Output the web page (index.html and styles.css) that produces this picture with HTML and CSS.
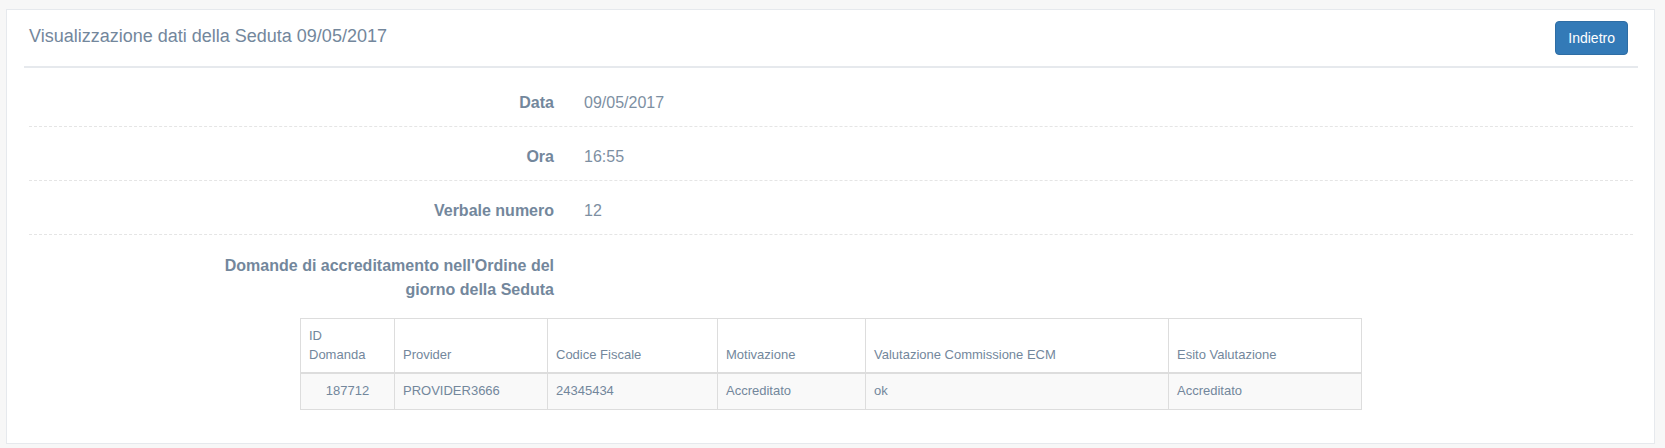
FILE: index.html
```html
<!DOCTYPE html>
<html lang="it">
<head>
<meta charset="UTF-8">
<meta name="viewport" content="width=device-width, initial-scale=1.0">
<title>Visualizzazione dati della Seduta</title>
<link rel="stylesheet" href="styles.css">
</head>

<body>
<div class="x-panel">
    <div class="x-title">
        <h2>Visualizzazione dati della Seduta 09/05/2017</h2>
        <button class="btn-primary">Indietro</button>
    </div>

    <div class="detail-row first">
        <div class="detail-label">Data</div>
        <div class="detail-value">09/05/2017</div>
    </div>
    <div class="detail-row">
        <div class="detail-label">Ora</div>
        <div class="detail-value">16:55</div>
    </div>
    <div class="detail-row">
        <div class="detail-label">Verbale numero</div>
        <div class="detail-value">12</div>
    </div>
    <div class="detail-row last">
        <div class="detail-label">Domande di accreditamento nell'Ordine del giorno della Seduta</div>
    </div>

    <div class="table-wrap">
        <table class="domande">
            <colgroup>
                <col style="width: 94px">
                <col style="width: 153px">
                <col style="width: 170px">
                <col style="width: 148px">
                <col style="width: 303px">
                <col style="width: 193px">
            </colgroup>
            <thead>
                <tr>
                    <th>ID<br>Domanda</th>
                    <th>Provider</th>
                    <th>Codice Fiscale</th>
                    <th>Motivazione</th>
                    <th>Valutazione Commissione ECM</th>
                    <th>Esito Valutazione</th>
                </tr>
            </thead>
            <tbody>
                <tr>
                    <td class="center">187712</td>
                    <td>PROVIDER3666</td>
                    <td>24345434</td>
                    <td>Accreditato</td>
                    <td>ok</td>
                    <td>Accreditato</td>
                </tr>
            </tbody>
        </table>
    </div>
</div>
</body>
</html>
```

FILE: styles.css
```css
body {
    margin: 0;
    padding: 9px 10px 5px 6px;
    background-color: #f7f7f7;
    font-family: "Liberation Sans", Arial, sans-serif;
    font-size: 13px;
    color: #73879c;
}
.x-panel {
    background-color: #fff;
    border: 1px solid #e6e9ed;
    padding: 10px 16px 0 17px;
}
.x-title {
    display: flex;
    justify-content: space-between;
    align-items: flex-start;
    padding: 1px 10px 11px 5px;
    border-bottom: 2px solid #e6e9ed;
}
.x-title h2 {
    margin: 5px 0 0 0;
    font-size: 18px;
    font-weight: 400;
    line-height: 21.6px;
}
.btn-primary {
    font-family: "Liberation Sans", Arial, sans-serif;
    font-size: 14px;
    line-height: 20px;
    padding: 6px 12px;
    color: #fff;
    background-color: #337ab7;
    border: 1px solid #2e6da4;
    border-radius: 4px;
    cursor: pointer;
}
.detail-row {
    display: flex;
    margin: 0 5px 0 5px;
    padding: 19px 0 12px;
    border-bottom: 1px dashed #e5e5e5;
    font-size: 16px;
    line-height: 22px;
}
.detail-row.first {
    margin-top: 5px;
}
.detail-row.last {
    border-bottom: none;
    padding: 19px 0 0;
    line-height: 24px;
}
.detail-label {
    width: 525px;
    flex-shrink: 0;
    text-align: right;
    font-weight: bold;
}
.detail-row.last .detail-label {
    width: 355px;
    margin-left: 170px;
}
.detail-value {
    margin-left: 30px;
    color: #7d8fa2;
}
.table-wrap {
    margin: 16px 0 33px 276px;
}
.domande {
    width: 1061px;
    table-layout: fixed;
    border-collapse: collapse;
    font-size: 13px;
    line-height: 18.57px;
}
.domande th,
.domande td {
    border: 1px solid #ddd;
    padding: 8px;
    text-align: left;
}
.domande th {
    font-weight: 400;
    vertical-align: bottom;
    border-bottom: 2px solid #ddd;
}
.domande tbody tr {
    background-color: #f9f9f9;
}
.domande td.center {
    text-align: center;
}
```
